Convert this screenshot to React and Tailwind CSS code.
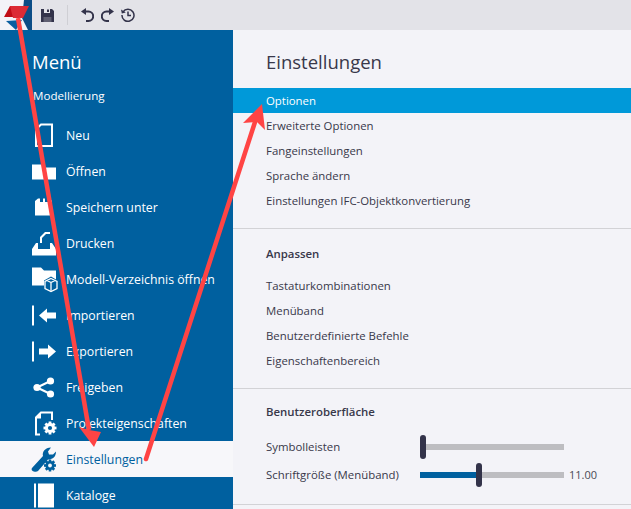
const font = { fontFamily: '"Open Sans", "Noto Sans", sans-serif' };

function Gear({ cx, cy, r, color, hole }) {
  const teeth = [0, 45, 90, 135];
  return (
    <g>
      {teeth.map((a) => (
        <rect key={a} x={cx - r * 0.28} y={cy - r * 1.3} width={r * 0.56} height={r * 2.6} fill={color} transform={`rotate(${a} ${cx} ${cy})`} />
      ))}
      <circle cx={cx} cy={cy} r={r} fill={color} />
      <circle cx={cx} cy={cy} r={r * 0.42} fill={hole} />
    </g>
  );
}

const icons = {
  neu: <path d="M9 1.5h11v21.5H4V6.5z" fill="none" stroke="#fff" strokeWidth="2" />,
  open: <path d="M0 5.5h9l3 3h12v12H0z" fill="#fff" />,
  save: <path d="M3 6l3-2.5h2V7h3V3.5h2V7h3V3.5h1.5l2.5 2.5v14.5H3z" fill="#fff" />,
  print: <path d="M8 12V6l5-5h5v11h2l4 6v6.5H0V18l4-6h2v6h12V3h-4l-4 4v5z" fill="#fff" fillRule="evenodd" />,
  folder: (
    <g>
      <path d="M0 0.5h9l3 3h12v9l-5-3-7 4v5H0z" fill="#fff" />
      <path d="M19 11.5l6 3v7l-6 3-6-3v-7zM19 15.5l-4-2M19 15.5l4-2M19 15.5v8" fill="none" stroke="#fff" strokeWidth="1.3" />
    </g>
  ),
  imp: (
    <g fill="#fff" transform="translate(0 2.5)">
      <rect x="0" y="0" width="2" height="20" />
      <path d="M7 10l8-7v4h9v6h-9v4z" />
    </g>
  ),
  exp: (
    <g fill="#fff" transform="translate(0 2.5)">
      <rect x="0" y="0" width="2" height="20" />
      <path d="M24 10l-8-7v4H7v6h9v4z" />
    </g>
  ),
  share: (
    <g fill="#fff">
      <path d="M5 12.5L18.5 6M5 12.5L18.5 19" stroke="#fff" strokeWidth="2" fill="none" />
      <circle cx="5" cy="12.5" r="3.6" />
      <circle cx="18.5" cy="6" r="3.6" />
      <circle cx="18.5" cy="19" r="3.6" />
    </g>
  ),
  project: (
    <g>
      <path d="M8 23.5H4V6.5L9 1.5h11V9" fill="none" stroke="#fff" strokeWidth="2" />
      <path d="M9 1.5v6H3z" fill="#fff" />
      <Gear cx="18" cy="17" r="5" color="#fff" hole="#00609f" />
    </g>
  ),
  settings: (
    <g>
      <path d="M0 21L11 9c-1-4 2-8.500 8-8.500l-3 4 1 3 4 0 3-3c0 6-4 8-8 8L6 24c-2 2-8 0-6-3z" fill="#00609f" />
      <Gear cx="18" cy="18.500" r="4.600" color="#00609f" hole="#f7f7fa" />
    </g>
  ),
  catalog: (
    <g fill="#fff">
      <rect x="2" y="0.5" width="2" height="24" />
      <rect x="6" y="0.5" width="16" height="24" />
    </g>
  ),
};

const menu = [
  ["Neu", "neu"],
  ["Öffnen", "open"],
  ["Speichern unter", "save"],
  ["Drucken", "print"],
  ["Modell-Verzeichnis öffnen", "folder"],
  ["Importieren", "imp"],
  ["Exportieren", "exp"],
  ["Freigeben", "share"],
  ["Projekteigenschaften", "project"],
  ["Einstellungen", "settings", true],
  ["Kataloge", "catalog"],
];

function MenuItem({ label, icon, active }) {
  return (
    <div className={`h-9 shrink-0 flex items-center pl-8 text-[12.3px] ${active ? "bg-[#f7f7fa] text-[#00609f]" : "text-white"}`}>
      <svg width="24" height="25" viewBox="0 0 24 25" className="shrink-0 overflow-visible">{icons[icon]}</svg>
      <span className="ml-2.5 pt-0.5 whitespace-nowrap">{label}</span>
    </div>
  );
}

function Row({ children, active }) {
  return (
    <div className={`h-[25px] flex items-center pl-[33px] text-[11.4px] whitespace-nowrap ${active ? "bg-[#0099d9] text-white" : "text-[#38384a]"}`}>
      {children}
    </div>
  );
}

function Slider({ label, fill, value }) {
  return (
    <div className="h-7 flex items-center pl-[33px] text-[11.4px] text-[#38384a]">
      <span className="w-[154px] whitespace-nowrap">{label}</span>
      <div className="relative w-[144px] h-1.5 bg-[#bdbdc1]">
        {fill > 0 && <div className="h-full bg-[#00609f]" style={{ width: fill }} />}
        <div className="absolute top-[-9px] w-1.5 h-6 rounded-sm bg-[#33334a]" style={{ left: fill }} />
      </div>
      {value && <span className="ml-[5px] text-[#4a4a55] text-[11px]">{value}</span>}
    </div>
  );
}

function Arrows() {
  return (
    <svg width="631" height="509" viewBox="0 0 631 509" className="absolute inset-0 pointer-events-none">
      <path d="M18 18L89 430" stroke="#ff4444" strokeWidth="4.5" fill="none" />
      <path d="M94 447L79 427L89 430L101 432z" fill="#ff4444" />
      <path d="M146 459L255 122" stroke="#ff4444" strokeWidth="4.5" strokeLinecap="round" fill="none" />
      <path d="M262 104L243 123L257 122L265 130z" fill="#ff4444" />
    </svg>
  );
}

export default function App() {
  return (
    <div className="relative w-[631px] h-[509px] overflow-hidden bg-[#f3f3f8] flex flex-col" style={font}>
      {/* Toolbar */}
      <div className="h-[30px] shrink-0 bg-[#e3e3e8] flex items-center">
        <svg width="32" height="30" viewBox="0 0 32 30" className="shrink-0">
          <rect width="32" height="30" fill="#f3f3f8" />
          <path d="M24 0h8v30h-4l-6-12z" fill="#0b4d86" />
          <path d="M6 21l16-1-6 10z" fill="#0b5fa0" />
          <path d="M4 17L10 6h8l-5 11z" fill="#c00d16" />
          <path d="M10 6h19l-6 12H13z" fill="#dc2b35" />
        </svg>
        <svg width="13" height="13" viewBox="0 0 13 13" className="ml-[9px]">
          <path d="M0 0h3v4h6V0h2l2 2v11H0z" fill="#33334a" />
          <rect x="6" y="0.5" width="2" height="2.5" fill="#33334a" />
          <rect x="2.5" y="8" width="8" height="5" fill="#e3e3e8" opacity="0.25" />
        </svg>
        <div className="ml-[13px] w-px h-5 bg-[#cfcfd4]" />
        <svg width="13" height="14" viewBox="0 0 13 14" className="ml-[13px]" fill="none" stroke="#33334a" strokeWidth="2">
          <path d="M4 3.500h3.500a4.700 4.700 0 0 1 0 9.400H5" />
          <path d="M0 3.500L5 0v7z" fill="#33334a" stroke="none" />
        </svg>
        <svg width="13" height="14" viewBox="0 0 13 14" className="ml-[7px]" fill="none" stroke="#33334a" strokeWidth="2">
          <path d="M9 3.500H5.500a4.700 4.700 0 0 0 0 9.400H8" />
          <path d="M13 3.500L8 0v7z" fill="#33334a" stroke="none" />
        </svg>
        <svg width="14" height="14" viewBox="0 0 14 14" className="ml-[7px]" fill="none" stroke="#33334a" strokeWidth="1.5">
          <path d="M2 4a6 6 0 1 1-1 3" />
          <path d="M0 1.500L0.800 5.500L4.800 4.500z" fill="#33334a" stroke="none" />
          <path d="M7 3.500V7.500H10" />
        </svg>
      </div>

      <div className="flex-1 flex min-h-0">
        {/* Left menu */}
        <div className="w-[233px] shrink-0 bg-[#00609f] flex flex-col">
          <div className="pl-8 pt-[17px] text-[18.5px] leading-[30px] text-white">Menü</div>
          <div className="pl-[33px] pt-[9px] text-[11.6px] leading-5 text-white">Modellierung</div>
          <div className="pt-[11px] flex flex-col">
            {menu.map(([label, icon, active]) => (
              <MenuItem key={label} label={label} icon={icon} active={active} />
            ))}
          </div>
        </div>

        {/* Right panel */}
        <div className="flex-1 min-w-0 flex flex-col">
          <div className="pl-[33px] pt-[17px] h-[58px] text-[18.5px] leading-[30px] text-[#38384a]">Einstellungen</div>
          <Row active>Optionen</Row>
          <Row>Erweiterte Optionen</Row>
          <Row>Fangeinstellungen</Row>
          <Row>Sprache ändern</Row>
          <Row>Einstellungen IFC-Objektkonvertierung</Row>
          <div className="mt-[15px] border-t border-[#d2d2d6]" />
          <div className="pl-[33px] pt-[15px] pb-[9px] text-[11.4px] leading-5 font-semibold text-[#38384a]">Anpassen</div>
          <Row>Tastaturkombinationen</Row>
          <Row>Menüband</Row>
          <Row>Benutzerdefinierte Befehle</Row>
          <Row>Eigenschaftenbereich</Row>
          <div className="mt-[15px] border-t border-[#d2d2d6]" />
          <div className="pl-[33px] pt-[13px] pb-[11px] text-[11.4px] leading-5 font-semibold text-[#38384a]">Benutzeroberfläche</div>
          <Slider label="Symbolleisten" fill={0} />
          <Slider label="Schriftgröße (Menüband)" fill={56} value="11.00" />
          <div className="mt-[15px] border-t border-[#d2d2d6]" />
        </div>
      </div>

      <Arrows />
    </div>
  );
}
